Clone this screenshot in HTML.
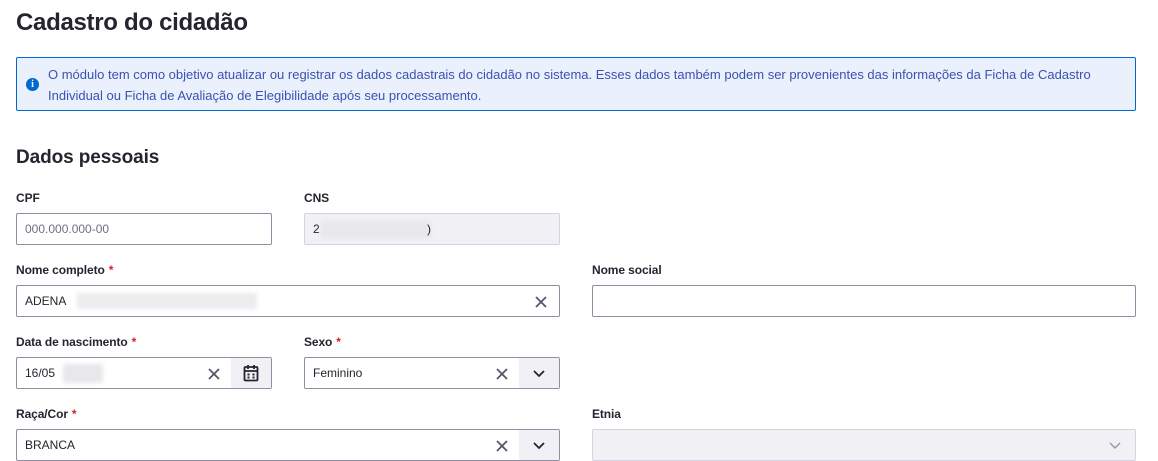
<!DOCTYPE html>
<html><head><meta charset="utf-8"><style>
*{box-sizing:border-box;margin:0;padding:0}
body{width:1158px;height:454px;background:#fff;font-family:"Liberation Sans",sans-serif;color:#24252e;position:relative;overflow:hidden}
h1{position:absolute;left:16px;top:9px;font-size:24px;font-weight:bold;letter-spacing:-0.3px}
h2{position:absolute;left:16px;top:147px;font-size:19px;font-weight:bold;letter-spacing:-0.1px}
.info{position:absolute;left:16px;top:57px;width:1120px;height:54px;background:#ebf0fd;border:1px solid #0069d0;border-radius:2px}
.info p{position:absolute;left:31px;top:6px;font-size:13px;line-height:21px;color:#3a52b0;letter-spacing:0;white-space:nowrap}
.ico{position:absolute;left:9px;top:20px;width:13px;height:13px;border-radius:50%;background:#0069d0;color:#fff;font-size:10px;font-weight:bold;text-align:center;line-height:13px;font-family:"Liberation Serif",serif}
.lbl{position:absolute;font-size:12px;font-weight:bold;letter-spacing:-0.1px}
.lbl b{color:#d01e2a;margin-left:4px}
.in{position:absolute;height:32px;border:1px solid #8f8fa2;border-radius:2px;background:#fff;font-size:12px;line-height:30px;padding-left:8px}
.dis{background:#f0f0f5;border-color:#d3d4dd}
.x{position:absolute;top:9px;width:14px;height:14px}
.btn{position:absolute;top:0;right:0;width:40px;height:30px;background:#f0f0f5}
.blur{position:absolute;background:#e8e8ec;filter:blur(2px)}
</style></head><body>
<h1>Cadastro do cidadão</h1>
<div class="info"><div class="ico">i</div><p>O módulo tem como objetivo atualizar ou registrar os dados cadastrais do cidadão no sistema. Esses dados também podem ser provenientes das informações da Ficha de Cadastro<br>Individual ou Ficha de Avaliação de Elegibilidade após seu processamento.</p></div>
<h2>Dados pessoais</h2>

<div class="lbl" style="left:16px;top:191px">CPF</div>
<div class="in" style="left:16px;top:213px;width:256px;color:#6f6f80">000.000.000-00</div>
<div class="lbl" style="left:304px;top:191px">CNS</div>
<div class="in dis" style="left:304px;top:213px;width:256px">2<div class="blur" style="left:16px;top:7px;width:110px;height:17px"></div><span style="position:absolute;left:122px">)</span></div>

<div class="lbl" style="left:16px;top:263px">Nome completo<b>*</b></div>
<div class="in" style="left:16px;top:285px;width:544px">ADENA<div class="blur" style="left:60px;top:7px;width:180px;height:16px;background:#ececee"></div>
<svg class="x" style="right:11px" viewBox="0 0 14 14"><path d="M2 2L12 12M12 2L2 12" stroke="#55566a" stroke-width="1.8"/></svg></div>
<div class="lbl" style="left:592px;top:263px">Nome social</div>
<div class="in" style="left:592px;top:285px;width:544px"></div>

<div class="lbl" style="left:16px;top:335px">Data de nascimento<b>*</b></div>
<div class="in" style="left:16px;top:357px;width:256px">16/05<div class="blur" style="left:46px;top:6px;width:40px;height:19px"></div>
<svg class="x" style="left:190px" viewBox="0 0 14 14"><path d="M2 2L12 12M12 2L2 12" stroke="#55566a" stroke-width="1.8"/></svg>
<div class="btn"><svg style="position:absolute;left:12px;top:6px" width="16" height="18" viewBox="0 0 16 18"><rect x="1.5" y="3" width="13" height="13.5" rx="1" fill="none" stroke="#24252e" stroke-width="1.8"/><path d="M1.5 7h13M5 1v4M11 1v4" stroke="#24252e" stroke-width="1.8"/><rect x="4.5" y="9.5" width="2" height="2" fill="#24252e"/><rect x="9.5" y="9.5" width="2" height="2" fill="#24252e"/><rect x="4.5" y="12.5" width="2" height="2" fill="#24252e"/><rect x="9.5" y="12.5" width="2" height="2" fill="#24252e"/></svg></div></div>
<div class="lbl" style="left:304px;top:335px">Sexo<b>*</b></div>
<div class="in" style="left:304px;top:357px;width:256px">Feminino
<svg class="x" style="left:190px" viewBox="0 0 14 14"><path d="M2 2L12 12M12 2L2 12" stroke="#55566a" stroke-width="1.8"/></svg>
<div class="btn"><svg style="position:absolute;left:14px;top:10px" width="12" height="10" viewBox="0 0 12 10"><path d="M1 3L6 8L11 3" fill="none" stroke="#24252e" stroke-width="1.8"/></svg></div></div>

<div class="lbl" style="left:16px;top:407px">Raça/Cor<b>*</b></div>
<div class="in" style="left:16px;top:429px;width:544px">BRANCA
<svg class="x" style="left:478px" viewBox="0 0 14 14"><path d="M2 2L12 12M12 2L2 12" stroke="#55566a" stroke-width="1.8"/></svg>
<div class="btn"><svg style="position:absolute;left:14px;top:10px" width="12" height="10" viewBox="0 0 12 10"><path d="M1 3L6 8L11 3" fill="none" stroke="#24252e" stroke-width="1.8"/></svg></div></div>
<div class="lbl" style="left:592px;top:407px">Etnia</div>
<div class="in dis" style="left:592px;top:429px;width:544px"><svg style="position:absolute;right:14px;top:10px" width="12" height="10" viewBox="0 0 12 10"><path d="M1 3L6 8L11 3" fill="none" stroke="#9a9aa8" stroke-width="1.5"/></svg></div>
</body></html>
